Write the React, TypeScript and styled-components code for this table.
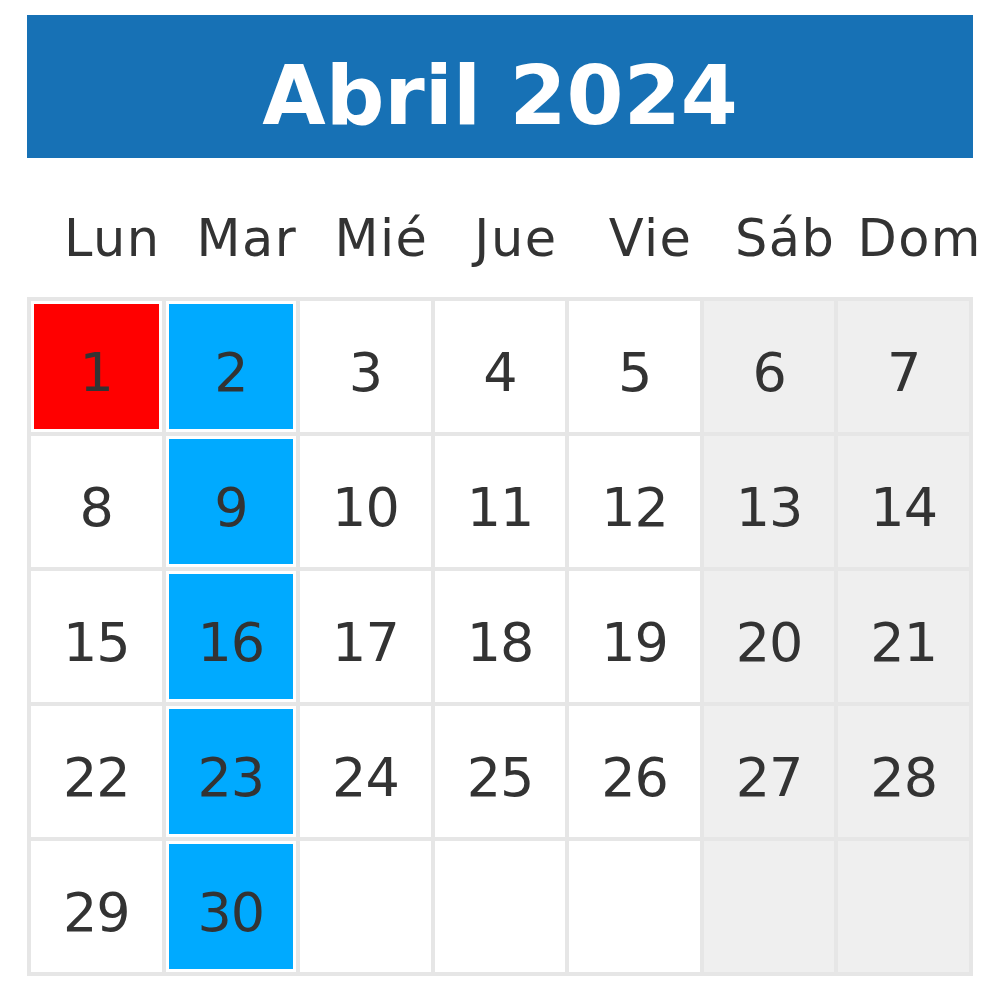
import React from "react";
import styled, { createGlobalStyle } from "styled-components";

const GlobalStyle = createGlobalStyle`
  body {
    margin: 0;
    background: #fff;
    font-family: "DejaVu Sans", "Open Sans", sans-serif;
  }
`;

const Page = styled.div`
  display: flex;
  flex-direction: column;
  width: 946px;
  padding: 15px 0 0 27px;
`;

const TitleBar = styled.div`
  display: flex;
  justify-content: center;
  align-items: center;
  height: 143px;
  padding-top: 18px;
  box-sizing: border-box;
  background-color: #1771b5;
  color: #fff;
  font-size: 82px;
  font-weight: bold;
`;

const WeekRow = styled.div`
  display: grid;
  grid-template-columns: repeat(7, 1fr);
  column-gap: 4px;
  height: 139px;
  padding: 22px 4px 0;
  margin-left: 16px;
  margin-right: -16px;
  align-items: center;
  box-sizing: border-box;
`;

const WeekName = styled.div`
  text-align: center;
  font-size: 51px;
  letter-spacing: 1.5px;
  color: #333;
  white-space: nowrap;
`;

const Grid = styled.div`
  display: grid;
  grid-template-columns: repeat(7, 1fr);
  grid-auto-rows: 131px;
  gap: 4px;
  padding: 4px;
  background-color: #e6e6e6;
`;

type Kind = "plain" | "weekend" | "holiday" | "tuesday";

const Cell = styled.div<{ $kind: Kind }>`
  display: flex;
  background-color: ${(p) => (p.$kind === "weekend" ? "#efefef" : "#fff")};
  padding: ${(p) => (p.$kind === "holiday" || p.$kind === "tuesday" ? "3px" : "0")};
`;

const Fill = styled.div<{ $kind: Kind }>`
  flex: 1;
  display: flex;
  justify-content: center;
  align-items: center;
  padding-top: 12px;
  background-color: ${(p) =>
    p.$kind === "holiday" ? "#ff0000" : p.$kind === "tuesday" ? "#00aaff" : "transparent"};
  font-size: 54px;
  letter-spacing: -1px;
  color: #333;
`;

const weekNames = ["Lun", "Mar", "Mié", "Jue", "Vie", "Sáb", "Dom"];

const App: React.FC = () => {
  const cells: { day: number | null; kind: Kind }[] = [];
  for (let i = 0; i < 35; i++) {
    const day = i + 1 <= 30 ? i + 1 : null;
    const col = i % 7;
    let kind: Kind = "plain";
    if (col >= 5) kind = "weekend";
    if (col === 1 && day) kind = "tuesday";
    if (day === 1) kind = "holiday";
    cells.push({ day, kind });
  }

  return (
    <Page>
      <GlobalStyle />
      <TitleBar>Abril 2024</TitleBar>
      <WeekRow>
        {weekNames.map((n) => (
          <WeekName key={n}>{n}</WeekName>
        ))}
      </WeekRow>
      <Grid>
        {cells.map((c, i) => (
          <Cell key={i} $kind={c.kind}>
            <Fill $kind={c.kind}>{c.day}</Fill>
          </Cell>
        ))}
      </Grid>
    </Page>
  );
};

export default App;
